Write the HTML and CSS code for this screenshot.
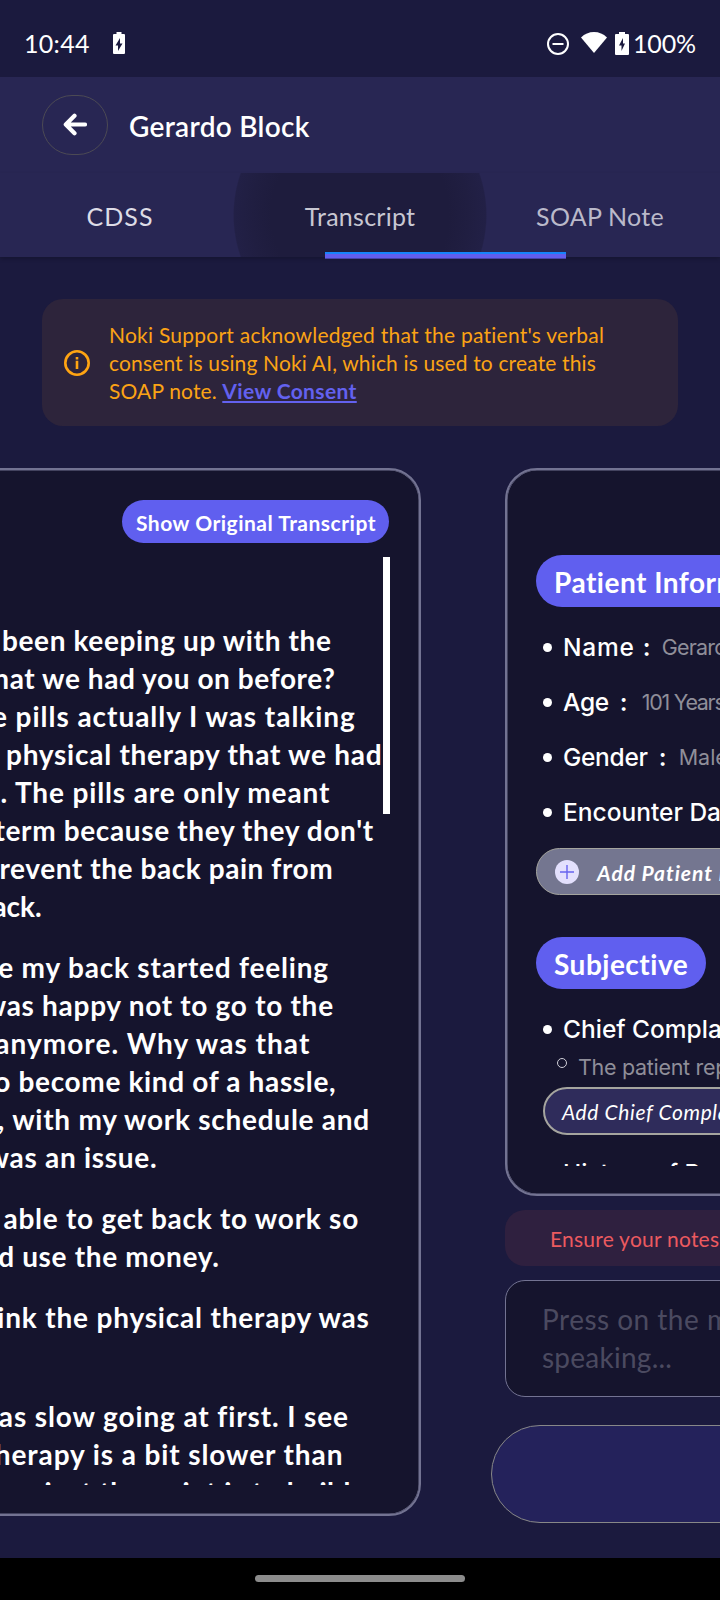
FILE: index.html
```html
<!DOCTYPE html>
<html lang="en">
<head>
<meta charset="utf-8">
<title>Transcript</title>
<link rel="stylesheet" href="styles.css">
</head>
<body>
<div class="phone">
  <div class="status">
    <span class="clock">10:44</span>
    <svg class="st-batt" width="12" height="23" viewBox="0 0 12 23"><path fill="#fff" fill-rule="evenodd" d="M3.500 0h5v2H11q1 0 1 1v18q0 1-1 1H1q-1 0-1-1V3q0-1 1-1h2.500zM7 6L2.500 13.500H5V19L9.500 11.500H7z"/></svg>
    <span class="grow"></span>
    <svg class="st-dnd" width="22" height="22" viewBox="0 0 22 22" fill="none" stroke="#fff" stroke-width="2"><circle cx="11" cy="11" r="10"/><path d="M5.500 11h11"/></svg>
    <svg class="st-wifi" width="26" height="21" viewBox="0 0 26 21"><path fill="#fff" d="M0 5.500Q5.500 0 13 0t13 5.500L13 21z"/></svg>
    <svg class="st-batt2" width="14" height="23" viewBox="0 0 14 23"><path fill="#fff" fill-rule="evenodd" d="M4 0h6v2h3q1 0 1 1v19q0 1-1 1H1q-1 0-1-1V3q0-1 1-1h3zM8 6L4 13.500h2.500V19L10 11.500H8z"/></svg>
    <span class="pct">100%</span>
  </div>
  <div class="head">
    <div class="back"><svg width="24" height="24" viewBox="0 0 24 24" fill="none" stroke="#fff" stroke-width="4.200"><path stroke-linecap="round" stroke-linejoin="round" d="M11.500 2.800L2.800 11.500l8.700 8.700M3.500 11.500H22"/></svg></div>
    <div class="title">Gerardo Block</div>
  </div>
  <div class="tabs">
    <div class="tab cdss">CDSS</div>
    <div class="tab active">Transcript</div>
    <div class="tab dim">SOAP Note</div>
    <div class="indicator"></div>
  </div>
  <div class="notice">
    <svg width="26" height="26" viewBox="0 0 26 26" fill="none" stroke="#ffa412"><circle cx="13" cy="13" r="11.700" stroke-width="2.600"/><path stroke-width="2.600" d="M13 10.800V19M13 7v2.600"/></svg>
    <div class="ntext"><span class="n1">Noki Support acknowledged that the patient's verbal</span><br><span class="n2">consent is using Noki AI, which is used to create this</span><br><span class="n3">SOAP note.</span> <a class="consent">View Consent</a></div>
  </div>
  <div class="pages">
    <div class="card transcript">
      <div class="show">Show Original Transcript</div>
      <div class="scroll">
        <div class="bar"></div>
        <p><span class="a1">been keeping up with the</span><span class="a2">that we had you on before?</span><span class="a3">the pills actually I was talking</span><span class="a4">physical therapy that we had</span><span class="a5">back. The pills are only meant</span><span class="a6">short-term because they they don't</span><span class="a7">prevent the back pain from</span><span class="a8">back.</span></p>
        <p><span class="b1">because my back started feeling</span><span class="b2">I was happy not to go to the</span><span class="b3">anymore. Why was that</span><span class="b4">to become kind of a hassle,</span><span class="b5">you know, with my work schedule and</span><span class="b6">that was an issue.</span></p>
        <p><span class="c1">able to get back to work so</span><span class="c2">I could use the money.</span></p>
        <p class="long"><span class="d1">think the physical therapy was</span></p>
        <p><span class="e1">It was slow going at first. I see</span><span class="e2">therapy is a bit slower than</span><span class="e3">just the point is to build</span></p>
      </div>
    </div>
    <div class="side">
      <div class="card note">
        <div class="clip">
          <div class="pill">Patient Information</div>
          <div class="row name"><i></i><b>Name</b><b class="colon">:</b><em>Gerardo Block</em></div>
          <div class="row age"><i></i><b>Age</b><b class="colon">:</b><em>101 Years</em></div>
          <div class="row gender"><i></i><b>Gender</b><b class="colon">:</b><em>Male</em></div>
          <div class="row enc"><i></i><b>Encounter Date</b></div>
          <div class="addp"><svg width="24" height="24" viewBox="0 0 24 24"><circle cx="12" cy="12" r="12" fill="#e3e0fd"/><path d="M12 5v14M5 12h14" stroke="#6763ee" stroke-width="1.400"/></svg><span>Add Patient Information</span></div>
          <div class="pill second">Subjective</div>
          <div class="row chief"><i></i><b>Chief Complaint</b></div>
          <div class="sub"><i></i><em>The patient reports</em></div>
          <div class="addc">Add Chief Complaint</div>
          <div class="row hist"><b>History of Present Illness</b></div>
        </div>
      </div>
      <div class="warn">Ensure your notes are saved</div>
      <div class="input"><span class="ph1">Press on the mic to start</span><br><span>speaking...</span></div>
      <div class="record"></div>
    </div>
  </div>
  <div class="nav"><div class="handle"></div></div>
</div>
</body>
</html>
```
FILE: styles.css
```css
* { box-sizing: border-box; }
body { margin: 0; background: #1b1a3e; color: #fff; font-family: Lato, "Open Sans", sans-serif; }
.phone { width: 720px; height: 1600px; overflow: hidden; display: flex; flex-direction: column; white-space: nowrap; }
svg { display: block; flex: none; }

/* status bar */
.status { height: 77px; flex: none; display: flex; align-items: flex-start; padding: 32px 26px 0 24px; font-size: 25px; line-height: 23px; }
.clock { width: 89px; letter-spacing: .31px; }
.grow { flex: 1; }
.st-dnd { margin: 1px 12px 0 0; }
.st-wifi { margin-right: 8px; }
.st-batt2 { margin-right: 4px; }
.pct { width: 61px; letter-spacing: -.17px; }

/* header */
.head { height: 96px; flex: none; background: #282653; display: flex; align-items: flex-start; padding: 18px 0 0 42px; }
.back { width: 66px; height: 60px; border: 1px solid #4c4a54; border-radius: 30px; padding: 17px 0 0 20px; }
.title { margin: 11px 0 0 21px; font-size: 28px; line-height: 40px; font-weight: 600; letter-spacing: .3px; }
.tabs { height: 84px; flex: none; display: flex; position: relative; background: #282653; font-size: 25px; letter-spacing: .25px; box-shadow: 0 2px 4px rgba(0, 0, 0, .2); }
.tab { width: 240px; padding-top: 23px; line-height: 40px; text-align: center; color: #dddce6; }
.tab.cdss { letter-spacing: 1.1px; }
.tab.active { color: #c8c7d2; background: radial-gradient(circle 127px at 50% 50%, #1e1c3d 70%, #201e41 85%, #222046 99%, transparent 100%); width: 254px; margin: 0 -7px; }
.tab.dim { color: #bab9ca; }
.indicator { position: absolute; left: 325px; top: 79px; width: 241px; height: 7px; background: #615eee; border-top: 2px solid #1684fb; border-bottom: 1px solid #4543a8; }

/* consent notice */
.notice { width: 636px; height: 127px; flex: none; margin: 42px 0 0 42px; border-radius: 21px; background: #2d243b; display: flex; align-items: center; padding-left: 22px; color: #fba315; font-size: 21px; line-height: 28px; }
.ntext { margin-left: 19px; }
.n1 { letter-spacing: .24px; }
.n2 { letter-spacing: .15px; }
.n3 { letter-spacing: .15px; }
.consent { color: #6361ef; font-weight: 700; letter-spacing: .37px; text-decoration: underline; text-decoration-thickness: 1.500px; text-underline-offset: 2px; }

/* cards */
.pages { display: flex; gap: 84px; margin-top: 42px; flex: 1; }
.card { background: #15142d; border: 2px solid #737392; border-radius: 32px; box-shadow: inset 0 0 0 .5px #737392; }
.transcript { width: 461px; height: 1048px; margin-left: -40px; flex: none; padding: 30px 0 0 38px; overflow: hidden; }
.show { width: 267px; height: 43px; margin-left: 122px; border-radius: 22px; background: #605fef; font-size: 21px; font-weight: 700; line-height: 45px; padding-left: 14px; letter-spacing: .5px; }
.scroll { height: 928px; margin-top: 14px; padding-top: 64px; overflow: hidden; position: relative; font-size: 28px; line-height: 38px; font-weight: 700; }
.bar { position: absolute; left: 383px; top: 0; width: 7px; height: 257px; background: #fff; }
.scroll p { margin: 0 0 23px; }
.scroll .long { padding-bottom: 38px; }
.scroll p span { display: block; }
.a1 { letter-spacing: .62px; margin-left: 2px; }
.a2 { letter-spacing: .58px; margin-left: -17.700px; }
.a3 { letter-spacing: .96px; margin-left: -36.200px; }
.a4 { letter-spacing: .75px; margin-left: 6px; }
.a5 { letter-spacing: .87px; margin-left: -61.500px; }
.a6 { letter-spacing: .64px; margin-left: -84.800px; }
.a7 { letter-spacing: .57px; margin-left: -17px; }
.a8 { letter-spacing: 0; margin-left: -23.500px; }
.b1 { letter-spacing: .8px; margin-left: -93.200px; }
.b2 { letter-spacing: .71px; margin-left: -32.300px; }
.b3 { letter-spacing: 1.04px; margin-left: -4.800px; }
.b4 { letter-spacing: .65px; margin-left: -16.600px; }
.b5 { letter-spacing: .74px; margin-left: -129.500px; }
.b6 { letter-spacing: .72px; margin-left: -74px; }
.c1 { letter-spacing: .74px; margin-left: 3.500px; }
.c2 { letter-spacing: .66px; margin-left: -73px; }
.d1 { letter-spacing: .82px; margin-left: -30.600px; }
.e1 { letter-spacing: .88px; margin-left: -51.500px; }
.e2 { letter-spacing: .9px; margin-left: -16.500px; }
.e3 { letter-spacing: .5px; margin-left: 44.500px; }

/* note card */
.side { width: 600px; flex: none; }
.note { height: 728px; padding-left: 29px; }
.clip { height: 696px; overflow: hidden; padding-top: 85px; }
.pill { width: 340px; height: 52px; border-radius: 26px; background: #605fef; padding-left: 18px; font-size: 28px; line-height: 54px; font-weight: 700; letter-spacing: .5px; }
.row { display: flex; align-items: center; height: 55px; font-family: Inter, sans-serif; font-size: 24.500px; }
.pill + .row { margin-top: 12px; }
.row i { width: 9px; height: 9px; border-radius: 50%; background: #fff; margin: 2px 11px 0 7px; }
.row b { font-weight: 450; }
.row em, .sub em { font-style: normal; font-size: 21.500px; color: #8f8e99; }
.name b { letter-spacing: .8px; }
.name em { letter-spacing: -.8px; }
.age em { letter-spacing: -1.3px; }
.age b { letter-spacing: -.3px; }
.gender b { letter-spacing: -.3px; }
.row .colon { width: 7px; margin: 0 13px 0 11px; font-weight: 600; }
.name .colon { margin: 0 12px 0 8px; }
.age .colon { margin-right: 15px; }
.addp { margin-top: 9px; width: 340px; height: 47px; border: 1.500px solid #a5a59f; border-radius: 24px; background: #747690; display: flex; align-items: center; padding-left: 18px; font: italic 700 21px/45px Lato, sans-serif; letter-spacing: .98px; }
.addp span { margin: 2px 0 0 18px; }
.second { margin-top: 42px; width: 170px; }
.sub { display: flex; font-family: Inter, sans-serif; line-height: 30px; height: 30px; margin-top: -4px; letter-spacing: -.3px; }
.sub i { width: 10px; height: 10px; border: 1px solid #d0d0d8; border-radius: 50%; margin: 6px 11px 0 21px; }
.addc { margin: 5px 0 0 7px; width: 340px; height: 48px; border: 2px solid #a5a59f; border-radius: 24px; background: #2f2c5b; padding-left: 17px; font: italic 400 21px/45px Lato, sans-serif; letter-spacing: .6px; }
.hist { margin: 10px 0 0 27px; }

/* message box */
.warn { height: 56px; margin-top: 14px; border-radius: 20px; background: #2f203f; color: #ec5a5f; font-size: 21px; line-height: 57px; padding-left: 45px; letter-spacing: .23px; }
.input { height: 117px; margin-top: 14px; border: 1.500px solid #737392; border-radius: 20px; background: #15142d; color: #4b4a60; font-size: 28px; line-height: 38px; padding: 19px 0 0 36px; letter-spacing: .25px; }
.ph1 { letter-spacing: .48px; }
.record { width: 640px; height: 98px; margin: 28px 0 0 -14px; border: 1.500px solid #888; border-radius: 49px; background: #24225b; }
.nav { height: 42px; flex: none; background: #000; padding-top: 17px; }
.handle { width: 210px; height: 7px; margin: 0 auto; border-radius: 4px; background: #8c8c8c; }
```
